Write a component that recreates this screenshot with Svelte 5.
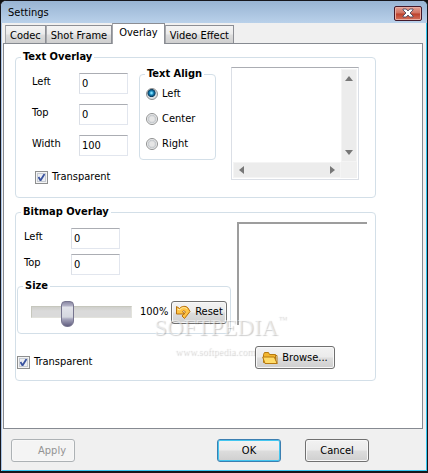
<script>
  const tabs = ['Codec', 'Shot Frame', 'Overlay', 'Video Effect'];
  const aligns = ['Left', 'Center', 'Right'];

  let tab = $state('Overlay');
  let align = $state('Left');
  let caption = $state('');

  let text = $state({ left: '0', top: '0', width: '100', transparent: true });
  let bitmap = $state({ left: '0', top: '0', transparent: true });

  let size = $state(100);
</script>

<div class="window">
  <header>
    <h1>Settings</h1>
    <button class="close" aria-label="Close">
      <svg width="12" height="10" viewBox="0 0 12 10">
        <path d="M1 1h3.200L6 3l1.800-2H11v1L8 5l3 3v1H7.800L6 7 4.200 9H1V8l3-3-3-3z" fill="#fff" stroke="#4d4b62" stroke-width=".9" />
      </svg>
    </button>
  </header>

  <div class="tabs" role="tablist">
    {#each tabs as t}
      <button role="tab" aria-selected={t === tab} class:active={t === tab} onclick={() => (tab = t)}>{t}</button>
    {/each}
  </div>

  <main>
    <fieldset>
      <legend>Text Overlay</legend>
      <div class="text-group">
        <div>
          <div class="row">
            <div class="fields">
              <label for="text-left">Left</label>
              <input id="text-left" type="text" bind:value={text.left} />
              <label for="text-top">Top</label>
              <input id="text-top" type="text" bind:value={text.top} />
              <label for="text-width">Width</label>
              <input id="text-width" type="text" bind:value={text.width} />
            </div>
            <fieldset class="align">
              <legend>Text Align</legend>
              <div class="radios">
                {#each aligns as a}
                  <label><input type="radio" name="align" value={a} bind:group={align} />{a}</label>
                {/each}
              </div>
            </fieldset>
          </div>
          <label class="check text-check">
            <input type="checkbox" bind:checked={text.transparent} />Transparent
          </label>
        </div>

        <div class="memo">
          <textarea aria-label="Overlay text" bind:value={caption}></textarea>
          <div class="bar vertical">
            <svg width="8" height="5" viewBox="0 0 8 5"><path d="M4 0l4 5H0z" fill="#777" /></svg>
            <svg width="8" height="5" viewBox="0 0 8 5"><path d="M0 0h8L4 5z" fill="#777" /></svg>
          </div>
          <div class="bar">
            <svg width="5" height="8" viewBox="0 0 5 8"><path d="M5 0v8L0 4z" fill="#777" /></svg>
            <svg width="5" height="8" viewBox="0 0 5 8"><path d="M0 0l5 4-5 4z" fill="#777" /></svg>
          </div>
          <div class="corner"></div>
        </div>
      </div>
    </fieldset>

    <fieldset class="bitmap">
      <legend>Bitmap Overlay</legend>
      <div class="bitmap-group">
        <div>
          <div class="fields tight">
            <label for="bmp-left">Left</label>
            <input id="bmp-left" type="text" bind:value={bitmap.left} />
            <label for="bmp-top">Top</label>
            <input id="bmp-top" type="text" bind:value={bitmap.top} />
          </div>
          <fieldset class="size">
            <legend>Size</legend>
            <div class="size-row">
              <input type="range" min="0" max="300" aria-label="Size" bind:value={size} />
              <output>{size}%</output>
              <button class="btn reset" onclick={() => (size = 100)}>
                <svg width="16" height="16" viewBox="0 0 16 16">
                  <path d="M1.500 2.500l3 2C6.500 2 11 1.500 13 4l2 3.500-5.500 7-2.500-2.500 3.500-4C9.500 6.500 8 6.500 7.500 7.500L9.500 10h-8z" fill="#ffc445" stroke="#b8700c" />
                  <path d="M2.500 5l2 1C7 3 10.500 3 12 5" fill="none" stroke="#fff0b0" />
                </svg>
                Reset
              </button>
            </div>
          </fieldset>
          <label class="check">
            <input type="checkbox" bind:checked={bitmap.transparent} />Transparent
          </label>
        </div>

        <div class="picture">
          <div class="preview"></div>
          <button class="btn browse">
            <svg width="16" height="14" viewBox="0 0 16 14">
              <path d="M1.500 11.500V3.500l1-2h4l1 2h6v8z" fill="#f3b62f" stroke="#b67a10" />
              <path d="M.7 6h11.500l3 6.500H3z" fill="#ffdc6b" stroke="#b67a10" />
              <path d="M13.500 4.500h1.500v8" fill="none" stroke="#b67a10" />
            </svg>
            Browse...
          </button>
        </div>
      </div>

      <div class="watermark">
        <span class="brand">SOFTPEDIA<sup>™</sup></span>
        <span class="url">www.softpedia.com</span>
      </div>
    </fieldset>
  </main>

  <footer>
    <button class="btn apply" disabled>Apply</button>
    <button class="btn ok">OK</button>
    <button class="btn">Cancel</button>
  </footer>
</div>

<style>
  :global(body) {
    background: #111;
  }

  .window, .window button, .window input, .window textarea {
    font-family: Tahoma, "DejaVu Sans Condensed", "DejaVu Sans", sans-serif;
    font-size: 11px;
    line-height: 14px;
    color: #000;
  }
  .window, .window * {
    box-sizing: border-box;
  }

  .window {
    display: flex;
    flex-direction: column;
    min-height: 100vh;
    border: 1px solid #16161c;
    border-bottom-width: 2px;
    border-radius: 6px 6px 0 0;
    background: #f0f0f0;
    box-shadow: inset 1px 0 #a9c4e6, inset -1px -1px #35c5ee;
  }

  header {
    display: flex;
    align-items: center;
    justify-content: space-between;
    height: 22px;
    padding: 2px 5px 0 7px;
    border-radius: 5px 5px 0 0;
    background: linear-gradient(#98b4d3, #b9d1ea);
  }
  h1 {
    margin: 0;
    font-size: 11px;
    font-weight: normal;
  }
  .close {
    display: flex;
    align-items: center;
    justify-content: center;
    width: 28px;
    height: 15px;
    padding: 0;
    border: 1px solid #43192a;
    border-radius: 2px;
    background: linear-gradient(#e3a094, #d0705f 48%, #bc3f2b 52%, #d4705c);
    box-shadow: inset 0 0 0 1px #e9aea3;
  }

  .tabs {
    display: flex;
    align-items: flex-end;
    height: 20px;
    padding: 0 4px;
  }
  .tabs button {
    height: 18px;
    padding: 2px 4px 0;
    border: 1px solid #8c8e94;
    border-bottom: 0;
    border-left-color: #a5a7ab;
    background: linear-gradient(#f4f4f4, #ebebeb 48%, #dddddd 52%, #cfcfcf);
    white-space: nowrap;
  }
  .tabs .active {
    z-index: 1;
    height: 21px;
    margin-bottom: -1px;
    padding: 0 6px 2px;
    background: #fff;
  }

  main {
    display: flex;
    flex: 1;
    flex-direction: column;
    gap: 7px;
    margin: 0 4px 0 2px;
    padding: 6px 46px 0 11px;
    border: 1px solid #868a91;
    background: #fff;
  }

  fieldset {
    min-width: 0;
    margin: 0;
    padding: 0;
    border: 1px solid #d3dfe8;
    border-radius: 4px;
  }
  legend {
    margin-left: 5px;
    padding: 0 2px;
    font-weight: bold;
  }

  .text-group {
    display: flex;
    gap: 15px;
    padding: 3px 16px 13px;
  }
  .row {
    display: flex;
    gap: 11px;
  }
  .fields {
    display: grid;
    grid-template-columns: 47px 49px;
    grid-auto-rows: 21px;
    gap: 10px 0;
    padding-top: 6px;
  }
  .fields label {
    padding-top: 2px;
  }
  .fields input {
    width: 100%;
    padding: 0 2px;
    border: 1px solid #e2e6ee;
    border-top-color: #abadb3;
    border-left-color: #dbdfe6;
    background: #fff;
  }

  .align {
    width: 77px;
    height: 93px;
  }
  .radios {
    display: flex;
    flex-direction: column;
    gap: 11px;
    padding: 6px;
  }
  .radios label, .check {
    display: flex;
    align-items: center;
    gap: 4px;
  }
  input[type="radio"], input[type="checkbox"] {
    flex: none;
    width: 12px;
    height: 12px;
    margin: 0;
    appearance: none;
    border: 1px solid #8e8f8f;
  }
  input[type="radio"] {
    border-radius: 50%;
    background: radial-gradient(#e6e6e6 30%, #c4c8cc 55%, #fff 70%);
  }
  input[type="radio"]:checked {
    background: radial-gradient(circle at 45% 40%, #7fe0ff 8%, #1683b8 25%, #0b3a5c 45%, #d9dee2 55%);
  }
  input[type="checkbox"] {
    width: 13px;
    height: 13px;
    box-shadow: inset 0 0 0 1px #f4f4f4, inset 0 0 0 2px #c5cad2;
    background: #eceef2;
  }
  input[type="checkbox"]:checked {
    background: #eceef2 url("data:image/svg+xml,%3Csvg xmlns='http://www.w3.org/2000/svg' viewBox='0 0 11 11'%3E%3Cpath d='M2.500 5l2 3.500L8.500 2' fill='none' stroke='%233a539f' stroke-width='1.800'/%3E%3C/svg%3E");
  }
  .text-check {
    margin: 10px 0 0 3px;
  }

  .memo {
    display: grid;
    flex: 1;
    grid-template: 1fr 16px / 1fr 16px;
    min-width: 0;
    height: 113px;
    padding: 1px;
    border: 1px solid #dbdfe6;
    border-top-color: #abadb3;
  }
  textarea {
    width: 100%;
    height: 100%;
    padding: 2px;
    resize: none;
    border: 0;
    outline: 0;
    overflow: hidden;
    background: #fff;
  }
  .bar {
    display: flex;
    align-items: center;
    justify-content: space-between;
    padding: 0 5px;
    border: 1px solid #f4f4f4;
    background: #ececec;
  }
  .bar.vertical {
    flex-direction: column;
    padding: 6px 0;
  }
  .corner {
    background: #f0f0f0;
  }

  .bitmap {
    position: relative;
  }
  .bitmap-group {
    display: flex;
    gap: 6px;
    padding: 3px 8px 11px 1px;
  }
  .tight {
    gap: 5px 0;
    padding: 6px 0 0 7px;
  }
  .size {
    width: 214px;
    margin: 4px 0 21px;
  }
  .size-row {
    display: flex;
    align-items: center;
    padding: 6px 3px 8px 13px;
  }
  input[type="range"] {
    width: 101px;
    height: 26px;
    margin: 0 8px 0 0;
    appearance: none;
    background: none;
  }
  input[type="range"]::-webkit-slider-runnable-track {
    height: 12px;
    border: 1px solid #c6c7bd;
    border-right-color: #e2e2dc;
    border-bottom-color: #e2e2dc;
    background: linear-gradient(#cfcfcb, #dadada 40%);
  }
  input[type="range"]::-webkit-slider-thumb {
    width: 13px;
    height: 26px;
    margin-top: -6px;
    appearance: none;
    border: 1px solid #77758f;
    border-radius: 4px 4px 6px 6px;
    background: linear-gradient(#8b89a4, #b5b4c8 4px, #e2e3ea 5px, #d5d7df 15px, #a7a6bd 17px, #625f80);
  }
  output {
    flex: 1;
  }

  .picture {
    display: flex;
    flex: 1;
    flex-direction: column;
    gap: 21px;
  }
  .preview {
    height: 103px;
    border: solid #9d9d9d;
    border-width: 2px 0 0 2px;
  }

  .btn {
    display: flex;
    align-items: center;
    justify-content: center;
    width: 64px;
    height: 23px;
    padding: 0;
    border: 1px solid #707070;
    border-radius: 3px;
    background: linear-gradient(#f2f2f2, #ebebeb 48%, #dddddd 52%, #cfcfcf);
    box-shadow: inset 0 0 0 1px #f8f8f8;
  }
  .reset {
    gap: 4px;
    width: 56px;
  }
  .browse {
    gap: 4px;
    width: 80px;
    margin-left: 18px;
  }

  .watermark {
    position: absolute;
    top: 96px;
    left: 138px;
    display: flex;
    flex-direction: column;
    width: 132px;
    pointer-events: none;
    color: rgba(255, 255, 255, .5);
    text-shadow: 1px 1px 1px rgba(0, 0, 0, .2);
  }
  .brand {
    font: 23px/26px "Liberation Serif", serif;
    white-space: nowrap;
  }
  .brand sup {
    font-size: 9px;
    line-height: 9px;
    vertical-align: top;
  }
  .url {
    padding: 4px 0 0 21px;
    font: 10px/14px "Liberation Serif", serif;
  }

  footer {
    display: flex;
    gap: 24px;
    padding: 10px 58px 9px 10px;
  }
  .window .apply {
    justify-content: flex-end;
    margin-right: auto;
    padding-right: 8px;
    border-color: #adb2b5;
    background: #f4f4f4;
    color: #939393;
  }
  .ok {
    border-color: #3c7fb1;
    box-shadow: inset 0 0 0 1px #43c6f0;
  }
</style>
